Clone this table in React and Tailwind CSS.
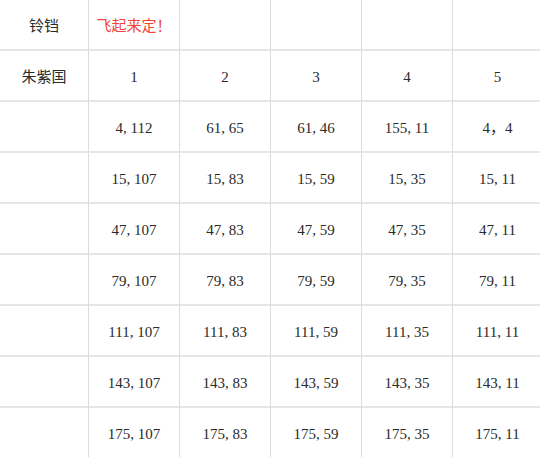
import React from 'react';

const rows = [
  ['', '4, 112', '61, 65', '61, 46', '155, 11', '4，4'],
  ['', '15, 107', '15, 83', '15, 59', '15, 35', '15, 11'],
  ['', '47, 107', '47, 83', '47, 59', '47, 35', '47, 11'],
  ['', '79, 107', '79, 83', '79, 59', '79, 35', '79, 11'],
  ['', '111, 107', '111, 83', '111, 59', '111, 35', '111, 11'],
  ['', '143, 107', '143, 83', '143, 59', '143, 35', '143, 11'],
  ['', '175, 107', '175, 83', '175, 59', '175, 35', '175, 11'],
];

function Cell({ children, red }) {
  return (
    <div
      className={`h-[51px] pt-[3px] flex items-center justify-center border-r border-b-2 border-r-[#dcdcdc] border-b-[#e6e6e6] text-[15px] ${red ? 'text-[#f0443a]' : 'text-[#2a2a2a]'}`}
    >
      {children}
    </div>
  );
}

export default function App() {
  return (
    <div
      className="w-[540px] h-[457px] overflow-hidden bg-white"
      style={{ fontFamily: '"Liberation Serif", "Noto Sans CJK SC", serif' }}
    >
      <div className="grid grid-cols-[89px_91px_91px_91px_91px_90px]">
        <Cell>铃铛</Cell>
        <Cell red>飞起来定！</Cell>
        <Cell />
        <Cell />
        <Cell />
        <Cell />
        <Cell>朱紫国</Cell>
        {[1, 2, 3, 4, 5].map(n => <Cell key={n}>{n}</Cell>)}
        {rows.map((r, i) => r.map((c, j) => <Cell key={i + '-' + j}>{c}</Cell>))}
      </div>
    </div>
  );
}
